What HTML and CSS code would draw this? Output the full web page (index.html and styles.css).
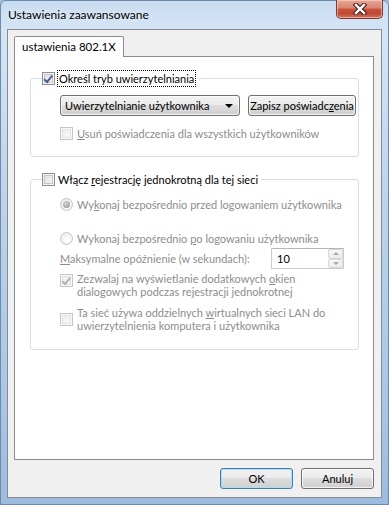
FILE: index.html
```html
<!DOCTYPE html>
<html>
<head>
    <meta charset="utf-8" />
    <title>Ustawienia zaawansowane</title>
    <link rel="stylesheet" href="styles.css">
</head>
<body>
    <div class="window">
        <div class="titlebar">
            <span class="title">Ustawienia zaawansowane</span>
            <span class="close-btn">
                <svg width="16" height="12" viewBox="0 0 16 12">
                    <path d="M4 2 L12 10 M12 2 L4 10" stroke="#4a2420" stroke-width="4.6" fill="none" stroke-linecap="square" />
                    <path d="M4 2 L12 10 M12 2 L4 10" stroke="#ffffff" stroke-width="2.4" fill="none" stroke-linecap="square" />
                </svg>
            </span>
        </div>

        <div class="client">
            <div class="tabs">
                <div class="tab active">ustawienia 802.1X</div>
            </div>

            <div class="panel">
                <fieldset class="group group-auth">
                    <legend>
                        <span class="check checked"></span>
                        <span class="focus-label">Okre&#347;l tryb uwierzytelniania</span>
                    </legend>
                    <div class="group-body">
                        <div class="select-row">
                            <div class="combo">
                                <span>Uwierzytelnianie u&#380;ytkownika</span>
                                <span class="combo-arrow"></span>
                            </div>
                            <button class="btn btn-save">Zapisz po&#347;wiadc<u>z</u>enia</button>
                        </div>
                        <div class="option disabled">
                            <span class="check"></span>
                            <span><u>U</u>su&#324; po&#347;wiadczenia dla wszystkich u&#380;ytkownik&oacute;w</span>
                        </div>
                    </div>
                </fieldset>

                <fieldset class="group group-sso">
                    <legend>
                        <span class="check"></span>
                        <span class="legend-label">W&#322;&#261;cz <u>r</u>ejestracj&#281; jednokrotn&#261; dla tej sieci</span>
                    </legend>
                    <div class="group-body">
                        <div class="option disabled">
                            <span class="radio selected"></span>
                            <span>Wy<u>k</u>onaj bezpo&#347;rednio przed logowaniem u&#380;ytkownika</span>
                        </div>
                        <div class="option disabled radio-second">
                            <span class="radio"></span>
                            <span>Wykonaj bezpo&#347;rednio <u>p</u>o logowaniu u&#380;ytkownika</span>
                        </div>
                        <div class="delay-row disabled">
                            <span><u>M</u>aksymalne op&oacute;&#378;nienie (w sekundach):</span>
                            <div class="spinner">
                                <span class="spinner-value">10</span>
                                <span class="spinner-buttons">
                                    <span class="spin up"></span>
                                    <span class="spin down"></span>
                                </span>
                            </div>
                        </div>
                        <div class="option multi disabled">
                            <span class="check checked"></span>
                            <span>Zezwalaj na wy&#347;wietlanie dodatkowych <u>o</u>kien<br>dialogowych podczas rejestracji jednokrotnej</span>
                        </div>
                        <div class="option multi disabled vlan">
                            <span class="check"></span>
                            <span>Ta sie&#263; u&#380;ywa oddzielnych <u>w</u>irtualnych sieci LAN do<br>uwierzytelnienia komputera i u&#380;ytkownika</span>
                        </div>
                    </div>
                </fieldset>
            </div>

            <div class="footer">
                <button class="btn btn-default">OK</button>
                <button class="btn">Anuluj</button>
            </div>
        </div>
    </div>
</body>
</html>
```

FILE: styles.css
```css
body {
    margin: 0;
    padding: 0;
    font-family: Lato, "Noto Sans", Arial, sans-serif;
    font-size: 11px;
    color: #000;
    background: #9fbedf;
    white-space: nowrap;
}

.window {
    width: 389px;
    height: 505px;
    box-sizing: border-box;
    display: flex;
    flex-direction: column;
    border-radius: 6px 6px 0 0;
    border: 1px solid #6f8aa8;
    background: linear-gradient(180deg, #c9dcf0 0%, #d5e5f6 6%, #bcd3eb 40%, #a9c6e5 80%, #9dbbdc 100%);
}

.titlebar {
    height: 28px;
    display: flex;
    align-items: flex-start;
    padding-left: 7px;
}

.title {
    line-height: 28px;
    font-size: 12px;
    color: #000;
    text-shadow: 0 0 6px rgba(255, 255, 255, 0.9);
}

.close-btn {
    margin-left: auto;
    margin-right: 5px;
    margin-top: -1px;
    width: 47px;
    height: 19px;
    box-sizing: border-box;
    border: 1px solid #7b3a31;
    border-top: none;
    border-radius: 0 0 5px 5px;
    background: linear-gradient(180deg, #e6a595 0%, #d98672 45%, #c8523d 50%, #c24a32 75%, #d3735c 100%);
    box-shadow: inset 0 0 0 1px rgba(255, 220, 210, 0.55);
    display: flex;
    justify-content: center;
    align-items: center;
}

.client {
    margin: 0 6px;
    height: 469px;
    box-sizing: border-box;
    border: 1px solid #848b95;
    background: #f0f0f0;
    padding: 6px 7px 0 6px;
    display: flex;
    flex-direction: column;
}

.tabs {
    display: flex;
    position: relative;
    z-index: 1;
    margin-bottom: -1px;
}

.tab {
    height: 21px;
    box-sizing: border-box;
    padding: 0 7px 0 7px;
    line-height: 20px;
    font-size: 11.5px;
    border: 1px solid #898c95;
    border-bottom: none;
    background: #fff;
    border-radius: 2px 2px 0 0;
}

.panel {
    height: 404px;
    box-sizing: border-box;
    border: 1px solid #898c95;
    background: #fff;
    padding-top: 13px;
}

.group {
    margin: 0 14px 0 15px;
    padding: 0 0 15px 0;
    border: 1px solid #d5dfe5;
    border-radius: 3px;
    min-width: 0;
}

.group-sso {
    margin-top: 14px;
    padding-bottom: 17px;
}

legend {
    margin-left: 11px;
    padding: 0 3px 0 0;
    height: 16px;
    display: flex;
    align-items: center;
    gap: 3px;
}

.focus-label {
    outline: 1px dotted #000;
    outline-offset: 0;
    padding: 0 1px;
    line-height: 15px;
}

.group-body {
    padding: 9px 0 0 29px;
}

.group-sso .group-body {
    padding-top: 9px;
}

.select-row {
    display: flex;
    gap: 8px;
    height: 21px;
}

.combo,
.btn {
    box-sizing: border-box;
    height: 21px;
    border: 1px solid #707070;
    border-radius: 3px;
    background: linear-gradient(180deg, #f2f2f2 0%, #ebebeb 50%, #dddddd 50%, #cfcfcf 100%);
    box-shadow: inset 0 0 0 1px rgba(255, 255, 255, 0.75);
    font: inherit;
    color: #000;
}

.combo {
    width: 180px;
    display: flex;
    align-items: center;
    padding: 0 6px 0 4px;
}

.combo-arrow {
    margin-left: auto;
    width: 0;
    height: 0;
    border-left: 4px solid transparent;
    border-right: 4px solid transparent;
    border-top: 4px solid #000;
}

.btn-save {
    width: 108px;
    padding: 0;
}

.option {
    display: flex;
    align-items: center;
    gap: 4px;
    height: 16px;
    margin-top: 9px;
}

.group-sso .option {
    margin-top: 0;
}

.group-sso .radio-second {
    margin-top: 18px;
}

.option.multi {
    height: auto;
    align-items: flex-start;
    line-height: 13px;
    margin-top: 3px;
}

.option.multi .check {
    margin-top: 2px;
}

.option.vlan {
    margin-top: 8px;
}

.option.vlan .check {
    margin-top: 7px;
}

.disabled {
    color: #8d8d8d;
}

.check {
    width: 13px;
    height: 13px;
    box-sizing: border-box;
    flex: none;
    border: 1px solid #8e8f8f;
    background: linear-gradient(135deg, #dcdcdc, #fbfbfb);
    box-shadow: inset 0 0 0 1px #f4f4f4, inset 0 0 0 2px #c6c6c6;
    position: relative;
}

.disabled .check {
    border-color: #c5c5c5;
    background: linear-gradient(135deg, #eaeaea, #fcfcfc);
    box-shadow: inset 0 0 0 1px #fafafa, inset 0 0 0 2px #e2e2e2;
}

.check.checked::after {
    content: "";
    position: absolute;
    left: 2px;
    top: 0;
    width: 3px;
    height: 7px;
    border-right: 2px solid #4a5f97;
    border-bottom: 2px solid #4a5f97;
    transform: rotate(40deg) translate(1px, 0);
}

.disabled .check.checked::after {
    border-color: #b4b4b4;
}

.radio {
    width: 13px;
    height: 13px;
    box-sizing: border-box;
    flex: none;
    border: 1px solid #c5c5c5;
    border-radius: 50%;
    background: radial-gradient(circle at 60% 65%, #ffffff, #e6e6e6);
    position: relative;
}

.radio.selected::after {
    content: "";
    position: absolute;
    left: 2px;
    top: 2px;
    width: 7px;
    height: 7px;
    border-radius: 50%;
    background: radial-gradient(circle at 40% 35%, #d8d8d8, #8c8c8c);
}

.delay-row {
    display: flex;
    align-items: center;
    height: 21px;
    margin-top: 2px;
}

.spinner {
    margin-left: auto;
    margin-right: 14px;
    width: 73px;
    height: 21px;
    box-sizing: border-box;
    border: 1px solid #c9cbcf;
    border-top-color: #b3b5b9;
    background: #fff;
    display: flex;
    align-items: center;
}

.spinner-value {
    padding-left: 5px;
    color: #000;
}

.spinner-buttons {
    margin-left: auto;
    width: 15px;
    height: 19px;
    display: flex;
    flex-direction: column;
}

.spin {
    flex: 1;
    border: 1px solid #d6d6d6;
    border-radius: 2px;
    background: linear-gradient(180deg, #f7f7f7, #ececec);
    display: flex;
    align-items: center;
    justify-content: center;
}

.spin::after {
    content: "";
    border-left: 3px solid transparent;
    border-right: 3px solid transparent;
}

.spin.up::after {
    border-bottom: 3px solid #a8a8a8;
}

.spin.down::after {
    border-top: 3px solid #a8a8a8;
}

.footer {
    display: flex;
    justify-content: flex-end;
    gap: 8px;
    padding-top: 8px;
}

.btn-default,
.footer .btn {
    width: 73px;
}

.btn-default {
    border-color: #3c7fb1;
    box-shadow: inset 0 0 0 1px #b0dcf6;
}
```
